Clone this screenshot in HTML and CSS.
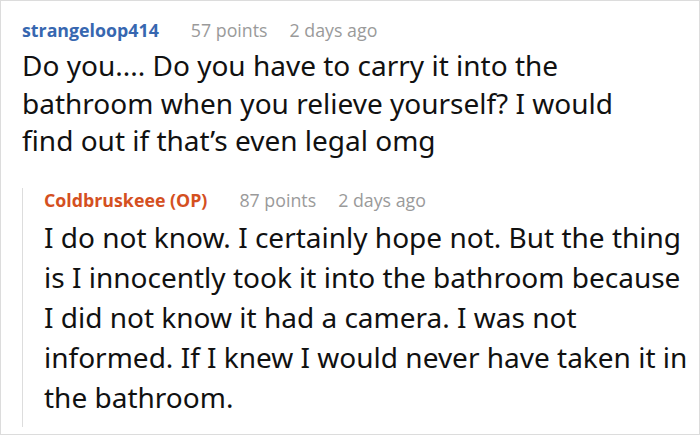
FILE: index.html
```html
<!DOCTYPE html>
<html>
<head>
<meta charset="utf-8">
<link rel="stylesheet" href="styles.css">
</head>
<body>
<div class="frame">
  <div class="comment">
    <div class="meta">
      <span class="author author-blue">strangeloop414</span>
      <span class="points">57 points</span>
      <span class="age">2 days ago</span>
    </div>
    <p class="text text-first">Do you.... Do you have to carry it into the bathroom when you relieve yourself? I would find out if that’s even legal omg</p>
  </div>
  <div class="reply">
    <div class="meta meta-reply">
      <span class="author author-op">Coldbruskeee (OP)</span>
      <span class="points">87 points</span>
      <span class="age">2 days ago</span>
    </div>
    <p class="text text-reply">I do not know. I certainly hope not. But the thing is I innocently took it into the bathroom because I did not know it had a camera. I was not informed. If I knew I would never have taken it in the bathroom.</p>
  </div>
</div>
</body>
</html>
```
FILE: styles.css
```css
html, body {
  margin: 0;
  padding: 0;
  background: #ffffff;
}
.frame {
  box-sizing: border-box;
  width: 700px;
  height: 435px;
  border: 1px solid #dcdcdc;
  padding: 17px 7px 0 21px;
  font-family: "Open Sans", "Noto Sans", sans-serif;
  color: #111111;
  overflow: hidden;
}
.meta {
  display: flex;
  align-items: baseline;
  font-size: 17.8px;
  line-height: 24px;
  white-space: nowrap;
}
.author {
  font-weight: 700;
  margin-right: 32px;
}
.author-blue { color: #3767b0; }
.author-op { color: #d4501f; }
.points {
  color: #9a9a9a;
  margin-right: 22px;
}
.age {
  color: #9a9a9a;
}
.text {
  margin: 0;
  font-family: "Noto Sans", "Open Sans", sans-serif;
  font-size: 28px;
  color: #111111;
}
.text-first {
  margin-top: 5px;
  line-height: 37.5px;
  max-width: 628px;
}
.reply {
  margin-top: 38.5px;
  border-left: 1px solid #dddddd;
  padding: 0 0 10px 21px;
}
.meta-reply {
  margin-top: -10px;
}
.text-reply {
  margin-top: 5px;
  line-height: 40px;
}
```
